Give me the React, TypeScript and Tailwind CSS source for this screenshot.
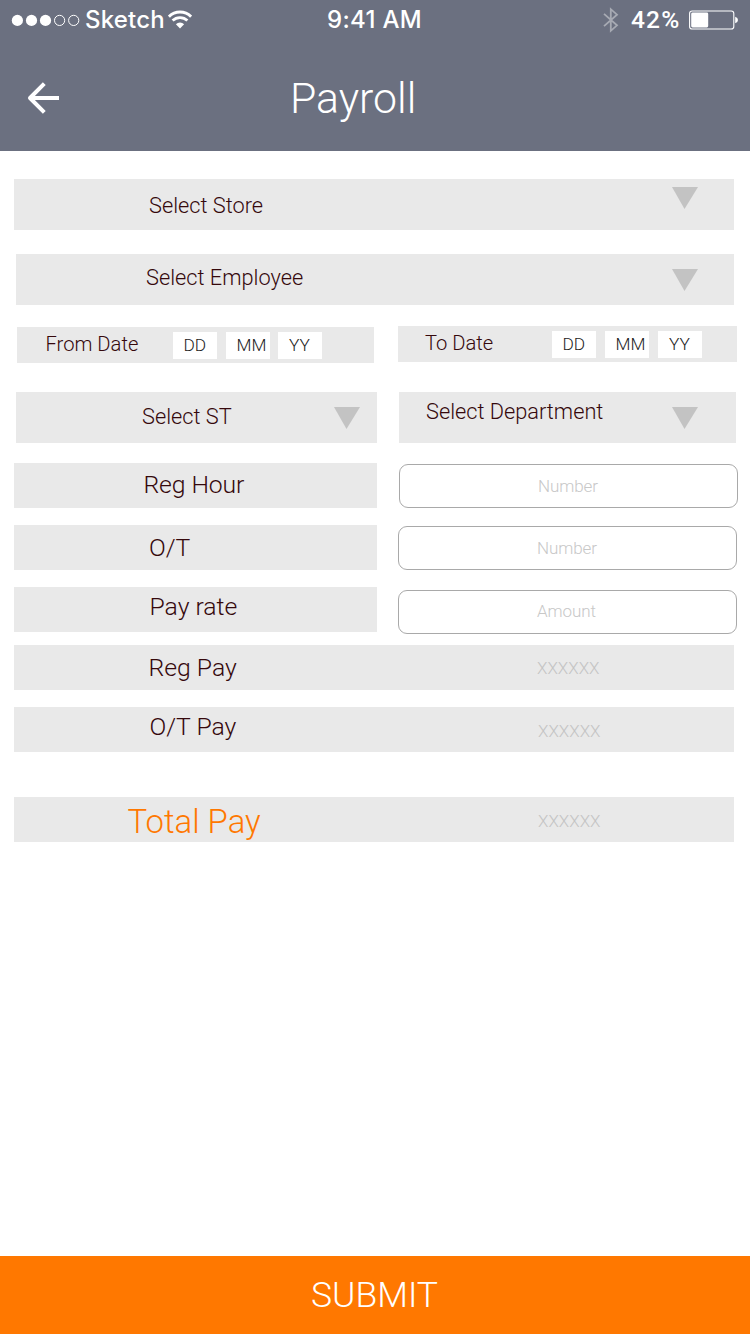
type CaretProps = { className: string };

function Caret({ className }: CaretProps) {
  return (
    <svg className={`h-[22px] w-[26px] shrink-0 ${className}`} viewBox="0 0 26 22" fill="#c3c3c3">
      <path d="M0 0H26L12.5 22Z" />
    </svg>
  );
}

type SelectProps = { label: string; className: string; labelClass: string; caretClass: string };

function SelectBar({ label, className, labelClass, caretClass }: SelectProps) {
  return (
    <div className={`flex h-[51px] items-start justify-between bg-[#e9e9e9] ${className}`}>
      <span className={`text-[21.75px] leading-[22px] whitespace-nowrap text-[#35080c] ${labelClass}`}>{label}</span>
      <Caret className={caretClass} />
    </div>
  );
}

type DateProps = { label: string; className: string; labelClass: string; monthClass: string; yearClass: string };

function DateBar({ label, className, labelClass, monthClass, yearClass }: DateProps) {
  const box = "h-[27px] w-[44px] shrink-0 bg-white pt-[5px] text-[17.3px] leading-[17px] text-[#1c1c1c]";
  return (
    <div className={`flex h-[36px] items-start bg-[#e9e9e9] ${className}`}>
      <span className={`shrink-0 pt-[7px] text-[20.2px] leading-[20px] whitespace-nowrap text-[#35080c] ${labelClass}`}>{label}</span>
      <span className={`mt-[5px] pl-[10.5px] ${box}`}>DD</span>
      <span className={`mt-[5px] pl-[10.5px] ${box} ${monthClass}`}>MM</span>
      <span className={`mt-[5px] pl-[11px] ${box} ${yearClass}`}>YY</span>
    </div>
  );
}

type EntryProps = {
  label: string;
  placeholder: string;
  className: string;
  labelClass: string;
  fieldClass: string;
};

function EntryRow({ label, placeholder, className, labelClass, fieldClass }: EntryProps) {
  return (
    <div className={`flex h-[45px] items-start pl-[14px] ${className}`}>
      <div className={`h-[45px] w-[363px] shrink-0 bg-[#e9e9e9] text-[24.75px] leading-[25px] text-[#35080c] ${labelClass}`}>
        {label}
      </div>
      <div
        className={`h-[44px] w-[339px] shrink-0 rounded-[9px] border border-[#a9a9a9] pl-[138px] text-[17px] leading-[17px] tracking-[-0.1px] text-[#c8c8c8] ${fieldClass}`}
      >
        {placeholder}
      </div>
    </div>
  );
}

type ResultProps = { label: string; className: string; labelClass: string; valueClass: string };

function ResultRow({ label, className, labelClass, valueClass }: ResultProps) {
  return (
    <div className={`ml-[14px] flex h-[45px] w-[720px] items-start bg-[#e9e9e9] ${className}`}>
      <span className={`shrink-0 whitespace-nowrap ${labelClass}`}>{label}</span>
      <span className={`text-[17px] leading-[17px] text-[#c4c4c4] ${valueClass}`}>XXXXXX</span>
    </div>
  );
}

function StatusBar() {
  return (
    <div className="flex h-[40px] items-start font-['Inter',sans-serif] text-[24px] leading-[24px] font-medium">
      <svg className="mt-[14px] ml-[11px] h-[13px] w-[69px] shrink-0" viewBox="0 0 69 13" fill="#fff">
        <circle cx="6.4" cy="6.4" r="5.6" />
        <circle cx="20.5" cy="6.4" r="5.6" />
        <circle cx="34.5" cy="6.4" r="5.6" />
        <circle cx="48.6" cy="6.4" r="5.1" fill="none" stroke="#fff" />
        <circle cx="62.7" cy="6.4" r="5.1" fill="none" stroke="#fff" />
      </svg>
      <span className="w-[83px] shrink-0 pt-[8px] pl-[5px] tracking-[0.2px]">Sketch</span>
      <svg className="mt-[10px] ml-[5px] h-[19px] w-[24px] shrink-0" viewBox="0 0 24 19" fill="none" stroke="#fff">
        <path d="M0.9 6.6A15.7 15.7 0 0 1 23.1 6.6" strokeWidth="2.9" />
        <path d="M4.6 10.6A10.5 10.5 0 0 1 19.4 10.6" strokeWidth="2.8" />
        <path d="M12 18.6L7.9 14.2A5.8 5.8 0 0 1 16.1 14.2Z" fill="#fff" stroke="none" />
      </svg>
      <span className="ml-[135px] w-[110px] shrink-0 pt-[8px] tracking-[0.3px]">9:41 AM</span>
      <svg className="mt-[7px] ml-[166px] h-[26px] w-[16px] shrink-0" viewBox="0 0 16 26" fill="none" stroke="#a7aab3" strokeWidth="1.8">
        <path d="M1 6.8L14 18.3L7.8 23.8V2.2L14 7.7L1 19.2" />
      </svg>
      <span className="ml-[12px] w-[56px] shrink-0 pt-[8px] font-['Roboto',sans-serif] text-[24.5px] tracking-[1.2px]">42%</span>
      <svg className="mt-[10px] ml-[2px] h-[20px] w-[50px] shrink-0" viewBox="0 0 50 20" fill="#fff">
        <rect x="0.6" y="1" width="44.2" height="18" rx="2.6" fill="none" stroke="#fff" strokeWidth="1.1" />
        <rect x="2.2" y="2.6" width="17" height="14.8" rx="1.4" />
        <path d="M46.2 6.8Q49 7.8 49 10T46.2 13.2Z" />
      </svg>
    </div>
  );
}

export default function App() {
  return (
    <div className="flex h-[1334px] w-[750px] flex-col overflow-hidden bg-white font-['Roboto',sans-serif] font-light">
      <header className="h-[151px] shrink-0 bg-[#6b7080] text-white">
        <StatusBar />
        <div className="flex items-start">
          <svg className="mt-[42px] ml-[27px] h-[32px] w-[33px] shrink-0" viewBox="0 0 33 32" fill="none" stroke="#fff" strokeWidth="4">
            <path d="M32 16H4" />
            <path d="M17.3 1.6L3 16L17.3 30.4" strokeLinejoin="round" />
          </svg>
          <h1 className="ml-[230px] pt-[37px] text-[42.8px] leading-[43px]">Payroll</h1>
        </div>
      </header>

      <main className="flex grow flex-col">
        <SelectBar
          label="Select Store"
          className="mt-[28px] ml-[14px] w-[720px]"
          labelClass="pt-[16px] pl-[135px]"
          caretClass="mt-[8px] mr-[36px]"
        />
        <SelectBar
          label="Select Employee"
          className="mt-[24px] ml-[16px] w-[718px]"
          labelClass="pt-[13px] pl-[130px]"
          caretClass="mt-[15px] mr-[36px]"
        />
        <div className="mt-[21px] flex h-[37px] items-start">
          <DateBar
            label="From Date"
            className="mt-[1px] ml-[17px] w-[357px]"
            labelClass="w-[156px] pl-[28.5px]"
            monthClass="ml-[9px]"
            yearClass="ml-[8px]"
          />
          <DateBar
            label="To Date"
            className="ml-[24px] w-[339px]"
            labelClass="w-[154px] pl-[27px]"
            monthClass="ml-[9px]"
            yearClass="ml-[9px]"
          />
        </div>
        <div className="mt-[29px] flex">
          <SelectBar label="Select ST" className="ml-[16px] w-[361px]" labelClass="pt-[14px] pl-[126px]" caretClass="mt-[15px] mr-[17px]" />
          <SelectBar
            label="Select Department"
            className="ml-[22px] w-[337px]"
            labelClass="pt-[9px] pl-[27px]"
            caretClass="mt-[15px] mr-[38px]"
          />
        </div>

        <EntryRow label="Reg Hour" placeholder="Number" className="mt-[20px]" labelClass="pt-[9px] pl-[129.5px] tracking-[-0.1px]" fieldClass="pt-[13px] mt-[1px] ml-[22px]" />
        <EntryRow label="O/T" placeholder="Number" className="mt-[17px]" labelClass="pt-[10px] pl-[135px]" fieldClass="pt-[13px] mt-[1px] ml-[21px]" />
        <EntryRow label="Pay rate" placeholder="Amount" className="mt-[17px]" labelClass="pt-[7px] pl-[135.5px]" fieldClass="pt-[12px] mt-[3px] ml-[21px]" />

        <ResultRow
          label="Reg Pay"
          className="mt-[13px]"
          labelClass="w-[523px] pt-[10px] pl-[134.5px] text-[24.75px] leading-[25px] text-[#35080c]"
          valueClass="pt-[15px]"
        />
        <ResultRow
          label="O/T Pay"
          className="mt-[17px]"
          labelClass="w-[524px] pt-[7px] pl-[135.5px] text-[24.75px] leading-[25px] text-[#35080c]"
          valueClass="pt-[16px]"
        />
        <ResultRow
          label="Total Pay"
          className="mt-[45px]"
          labelClass="w-[524px] pt-[8px] pl-[113.5px] text-[32.9px] leading-[33px] text-[#ff7800]"
          valueClass="pt-[16px]"
        />
      </main>

      <button className="flex h-[78px] w-full shrink-0 items-start bg-[#ff7800] pt-[21px] pl-[311px] text-[35.5px] leading-[36px] text-white">
        SUBMIT
      </button>
    </div>
  );
}
